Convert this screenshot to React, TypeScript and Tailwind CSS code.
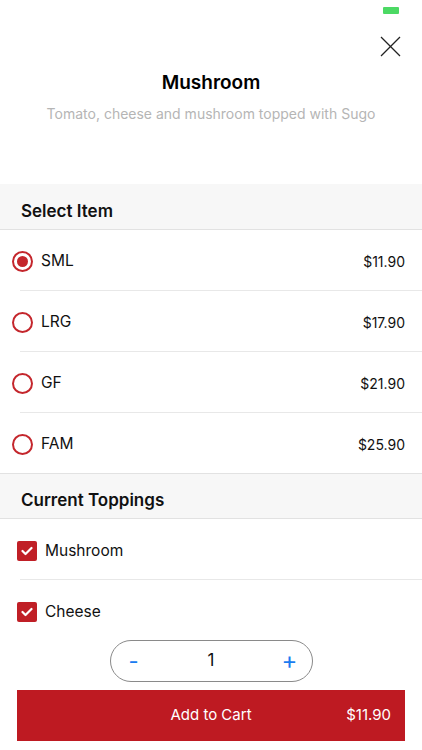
import React, { useState } from "react";

const sizes = [
  { label: "SML", price: "$11.90" },
  { label: "LRG", price: "$17.90" },
  { label: "GF", price: "$21.90" },
  { label: "FAM", price: "$25.90" },
];

const toppings = ["Mushroom", "Cheese"];

function SectionHeader({ title }: { title: string }) {
  return (
    <div className="h-[46px] bg-[#f7f7f7] border-b border-[#e2e2e2] flex items-center pt-[10px] pl-[21px]">
      <span className="text-[17px] font-semibold text-[#111]">{title}</span>
    </div>
  );
}

export default function App() {
  const [selected, setSelected] = useState(0);
  const [qty, setQty] = useState(1);

  return (
    <div
      className="w-[422px] h-[750px] bg-white flex flex-col overflow-hidden"
      style={{ fontFamily: "Inter, 'Noto Sans', sans-serif" }}
    >
      <div className="flex-1 overflow-hidden flex flex-col">
        {/* Top */}
        <div className="h-[184px] flex flex-col shrink-0">
          <div className="flex justify-end pt-[7px] pr-[23px]">
            <div className="w-[16px] h-[7px] rounded-[1px] bg-[#4cd964]" />
          </div>
          <div className="flex justify-end pr-[21px] mt-[22px]">
            <svg width="21" height="21" viewBox="0 0 21 21" fill="none" stroke="#222" strokeWidth="1.3">
              <line x1="1" y1="1" x2="20" y2="20" />
              <line x1="20" y1="1" x2="1" y2="20" />
            </svg>
          </div>
          <h1 className="mt-[13px] text-center text-[19px] leading-[26px] font-semibold text-black">Mushroom</h1>
          <p className="mt-[8px] text-center text-[14px] leading-[20px] text-[#b5b5b5]">
            Tomato, cheese and mushroom topped with Sugo
          </p>
        </div>

        <SectionHeader title="Select Item" />
        {sizes.map((s, i) => (
          <div key={s.label} className={i === sizes.length - 1 ? "border-b border-[#e2e2e2]" : ""}>
            <button
              onClick={() => setSelected(i)}
              className="w-full h-[60px] flex items-center pt-[3px] pl-[12px] pr-[17px]"
            >
              <span className="w-[21px] h-[21px] rounded-full border-2 border-[#c4262c] flex items-center justify-center">
                {selected === i && <span className="w-[11px] h-[11px] rounded-full bg-[#c4262c]" />}
              </span>
              <span className="ml-[8px] text-[15.5px] text-[#111]">{s.label}</span>
              <span className="ml-auto text-[14px] text-[#111]">{s.price}</span>
            </button>
            {i < sizes.length - 1 && <div className="ml-[20px] h-px bg-[#e8e8e8]" />}
          </div>
        ))}

        <SectionHeader title="Current Toppings" />
        {toppings.map((t, i) => (
          <div key={t}>
            <div className="h-[60px] flex items-center pt-[3px] pl-[17px]">
              <span className="w-[20px] h-[20px] rounded-[2px] bg-[#c01f26] flex items-center justify-center">
                <svg width="12" height="10" viewBox="0 0 12 10" fill="none" stroke="white" strokeWidth="2.2" strokeLinecap="round" strokeLinejoin="round">
                  <polyline points="1.5,5 4.5,8 10.5,2" />
                </svg>
              </span>
              <span className="ml-[8px] text-[15.5px] text-[#111]">{t}</span>
            </div>
            {i < toppings.length - 1 && <div className="ml-[20px] h-px bg-[#e8e8e8]" />}
          </div>
        ))}
      </div>

      {/* Bottom */}
      <div className="shrink-0 flex flex-col items-center pb-[9px]">
        <div className="w-[203px] h-[42px] rounded-full border border-[#8a8a8a] flex items-center justify-between px-[16px]">
          <button onClick={() => setQty(Math.max(1, qty - 1))} className="text-[22px] leading-none text-[#1a7cf0] w-[14px]">
            -
          </button>
          <span className="text-[17px] text-[#111]">{qty}</span>
          <button onClick={() => setQty(qty + 1)} className="text-[24px] leading-none text-[#1a7cf0] w-[14px]">
            +
          </button>
        </div>
        <button className="mt-[8px] w-[388px] h-[51px] bg-[#be1a22] grid grid-cols-[1fr_auto_1fr] items-center text-white">
          <span />
          <span className="text-[15px]">Add to Cart</span>
          <span className="text-[15px] text-right pr-[14px]">$11.90</span>
        </button>
      </div>
    </div>
  );
}
